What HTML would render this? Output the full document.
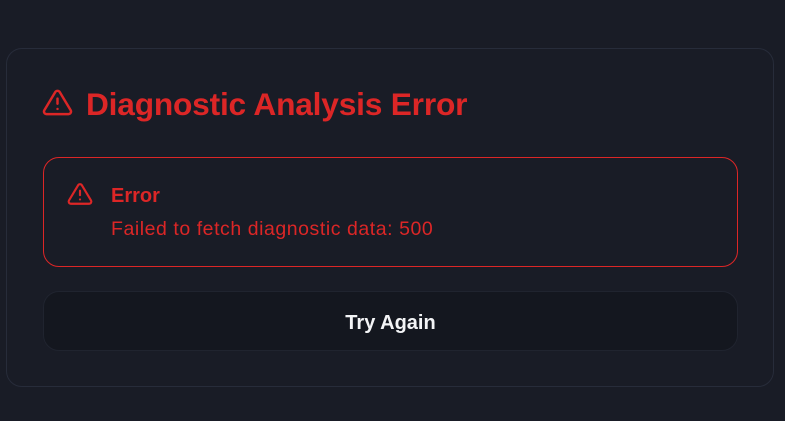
<!DOCTYPE html>
<html><head><style>
html,body{margin:0;padding:0;background:#191c26;width:785px;height:421px;overflow:hidden;font-family:"Liberation Sans",sans-serif;}
.card{position:absolute;left:6px;top:48px;width:766px;height:337px;border:1px solid #272c3a;border-radius:16px;background:#191c26;}
.title{position:absolute;left:86px;top:86px;font-size:31.7px;font-weight:bold;color:#dc2626;letter-spacing:-0.2px;white-space:nowrap;}
.alert{position:absolute;left:43px;top:157px;width:693px;height:108px;border:1px solid #dc2626;border-radius:16px;}
.etitle{position:absolute;left:111px;top:185px;font-size:20px;font-weight:bold;color:#dc2626;}
.emsg{position:absolute;left:111px;top:218px;font-size:19.5px;letter-spacing:0.55px;color:#dc2626;white-space:nowrap;}
.btn{position:absolute;left:43px;top:291px;width:693px;height:58px;border:1px solid #20242f;border-radius:16px;background:#14171f;color:#f3f4f6;font-weight:bold;font-size:20px;text-align:center;line-height:62px;}
svg{position:absolute;}
</style></head><body>
<div class="card"></div>
<svg style="left:42px;top:87px" width="31" height="31" viewBox="0 0 24 24" fill="none" stroke="#dc2626" stroke-width="1.9" stroke-linecap="round" stroke-linejoin="round"><path d="M10.3 3.9 1.8 18a2 2 0 0 0 1.7 3h17a2 2 0 0 0 1.7-3L13.7 3.9a2 2 0 0 0-3.4 0z"/><path d="M12 9v4"/><path d="M12 17h.01"/></svg>
<div class="title">Diagnostic Analysis Error</div>
<div class="alert"></div>
<svg style="left:67px;top:181px" width="26" height="26" viewBox="0 0 24 24" fill="none" stroke="#dc2626" stroke-width="2" stroke-linecap="round" stroke-linejoin="round"><path d="M10.3 3.9 1.8 18a2 2 0 0 0 1.7 3h17a2 2 0 0 0 1.7-3L13.7 3.9a2 2 0 0 0-3.4 0z"/><path d="M12 9v4"/><path d="M12 17h.01"/></svg>
<div class="etitle">Error</div>
<div class="emsg">Failed to fetch diagnostic data: 500</div>
<div class="btn">Try Again</div>
</body></html>
